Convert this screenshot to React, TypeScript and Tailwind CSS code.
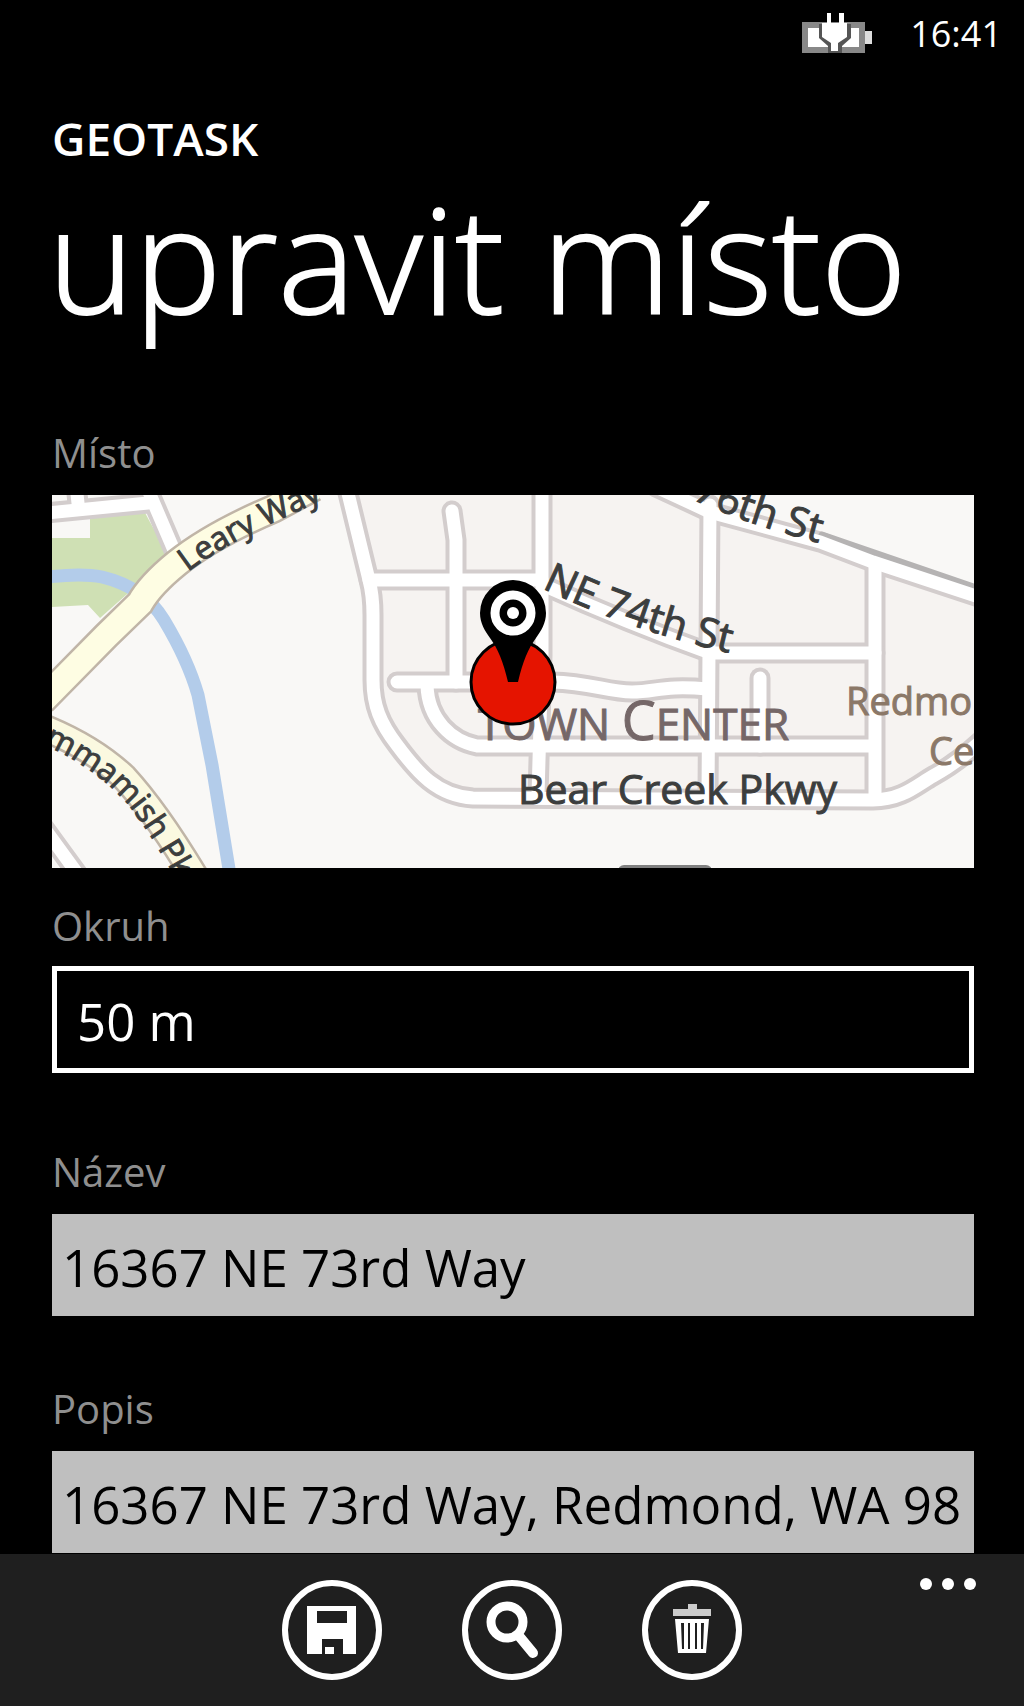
import React from "react";

const roads = [
  // outer loop and Bear Creek Pkwy
  "M294 -10 L317 85 Q321 100 321 120 L321 185 C321 210 328 228 345 250 C365 277 385 301 421 303 L821 305 C850 305 865 290 881 281 Q905 268 930 245",
  "M317 85 H490",
  "M400 16 L404 45 V187",
  "M490 -10 V160 L486 300",
  "M345 187 H500 C540 188 555 197 580 197 C605 197 610 190 656 194",
  "M375 190 C376 225 400 246 425 251 H821",
  "M658 10 L656 300",
  "M823 70 V300",
  "M656 158 H823",
  "M491 90 Q575 128 658 158",
  "M604 -8 L658 17 L768 47 L821 67 L930 103",
  "M708 183 V251",
  // west side
  "M-6 18 L96 8",
  "M24 -10 L26 8",
  "M94 -10 L124 60",
  "M-10 330 L30 385",
];

const LEARY = "M-10 206 L55 140 L88 108 Q98 90 125 68 Q160 40 221 14 L262 -8";
const SAMMAMISH = "M-10 232 Q40 252 72 282 Q105 318 145 385";

const Map = () => (
  <svg
    viewBox="0 0 922 373"
    className="block w-full font-['Open_Sans',sans-serif]"
    role="img"
    aria-label="Mapa"
  >
    <defs>
      <path id="leary-label" d="M136 77 Q177 46 238 20 L310 -14" />
      <path id="sammamish-label" d="M-9 249 Q46 274 78 312 Q102 343 130 395" />
      <path id="ne74-label" d="M490 93 Q590 142 720 167" />
      <path id="st76-label" d="M640 4 Q702 33 800 56" />
    </defs>
    <rect width="922" height="373" fill="#f9f8f6" />
    <path
      d="M294 -10 L321 95 V185 C325 240 365 297 421 303 H821 Q870 300 922 255 V100 L768 47 L600 -10 Z"
      fill="#f6f3f1"
    />
    <path
      d="M38 22 L92 16 L117 62 L48 123 L36 110 L0 112 V43 H38 Z"
      fill="#cfe0b4"
    />
    <path
      d="M-4 82 Q30 78 50 82 Q92 92 112 125 Q136 165 146 200 L160 270 L178 380"
      fill="none"
      stroke="#b3ccea"
      strokeWidth="13"
    />

    <g fill="none" stroke="#d3cdcd" strokeWidth="21" strokeLinecap="round">
      {roads.map((d) => (
        <path key={d} d={d} />
      ))}
      <path d="M770 40 L930 95" stroke="#b5b3b3" strokeWidth="7" />
    </g>
    <g fill="none" stroke="#ffffff" strokeWidth="13" strokeLinecap="round">
      {roads.map((d) => (
        <path key={d} d={d} />
      ))}
    </g>

    <g fill="none">
      <path d={SAMMAMISH} stroke="#c0b5a7" strokeWidth="29" />
      <path d={LEARY} stroke="#c0b5a7" strokeWidth="30" />
      <path d={SAMMAMISH} stroke="#fbf9e0" strokeWidth="24" />
      <path d={LEARY} stroke="#fefde3" strokeWidth="25" />
    </g>
    <rect x="566" y="370" width="94" height="12" rx="6" fill="#808080" />

    <g fill="#3c3e3e" stroke="#3c3e3e" strokeWidth="1">
      <text fontSize="32">
        <textPath href="#leary-label">Leary Way</textPath>
      </text>
      <text fontSize="32">
        <textPath href="#sammamish-label">mmamish Pk</textPath>
      </text>
      <text fontSize="41">
        <textPath href="#ne74-label">NE 74th St</textPath>
      </text>
      <text fontSize="41">
        <textPath href="#st76-label">76th St</textPath>
      </text>
      <text x="466" y="309" fontSize="41">
        Bear Creek Pkwy
      </text>
    </g>
    <text x="426" y="245" fontSize="44" fill="#756768" stroke="#756768" strokeWidth="1">
      TOWN <tspan fontSize="54">C</tspan>ENTER
    </text>
    <g fill="#8b7868" stroke="#8b7868" strokeWidth="1" fontSize="38">
      <text x="794" y="220">
        Redmo
      </text>
      <text x="877" y="270">
        Ce
      </text>
    </g>

    <circle cx="461" cy="187" r="42" fill="#e51400" stroke="#000" strokeWidth="3" />
    <path
      d="M461 85 A33 33 0 0 1 494 118 C494 128 489 136 484 143 C476 154 471 166 466 187 H456 C451 166 446 154 438 143 C433 136 428 128 428 118 A33 33 0 0 1 461 85 Z"
      fill="#000"
    />
    <circle cx="461" cy="118" r="18" fill="none" stroke="#fff" strokeWidth="9" />
    <circle cx="461" cy="118" r="6" fill="#fff" />
  </svg>
);

const BatteryIcon = () => (
  <svg width="72" height="44" viewBox="0 0 72 44" aria-hidden="true">
    <rect x="3" y="13" width="57" height="25" fill="#fff" stroke="#888" strokeWidth="6" />
    <rect x="63" y="19" width="7" height="13" fill="#ddd" />
    <path d="M17 12 H49 V26 L40 34 V41 H26 V34 L17 26 Z" fill="#555" />
    <path
      d="M25 1 H29 V11 H37 V1 H42 V11 H45 V25 L36 31 V39 H29 V31 L20 25 V11 H25 Z"
      fill="#fff"
    />
  </svg>
);

const SaveIcon = () => (
  <svg viewBox="0 0 102 102" className="size-full" aria-hidden="true">
    <circle cx="51" cy="51" r="47" fill="none" stroke="#fff" strokeWidth="6" />
    <path
      d="M26 27 H75 V75 H62 V60 H41 V75 H26 Z M36 32 V44 H66 V32 Z"
      fill="#fff"
      fillRule="evenodd"
    />
    <rect x="44" y="68" width="9" height="7" fill="#fff" />
  </svg>
);

const SearchIcon = () => (
  <svg viewBox="0 0 102 102" className="size-full" aria-hidden="true">
    <circle cx="51" cy="51" r="47" fill="none" stroke="#fff" strokeWidth="6" />
    <circle cx="46" cy="43" r="16" fill="none" stroke="#fff" strokeWidth="9" />
    <path d="M58 57 L72 74" stroke="#fff" strokeWidth="10" strokeLinecap="round" />
  </svg>
);

const DeleteIcon = () => (
  <svg viewBox="0 0 102 102" className="size-full" aria-hidden="true">
    <circle cx="51" cy="51" r="47" fill="none" stroke="#fff" strokeWidth="6" />
    <path d="M47 25 H56 V30 H70 V37 H32 V30 H47 Z" fill="#ccc" />
    <path
      d="M34 40 H68 L65 74 H37 Z M40 44 L41 70 H43 V44 Z M47 44 V70 H49 V44 Z M54 44 V70 H56 V44 Z M60 44 V70 H62 L63 44 Z"
      fill="#fff"
      fillRule="evenodd"
    />
  </svg>
);

const actions = [
  { label: "uložit", icon: SaveIcon },
  { label: "hledat", icon: SearchIcon },
  { label: "odstranit", icon: DeleteIcon },
];

const labelClass = "block text-[40px] leading-[56px] text-[#8f8f8f]";
const inputClass =
  "block h-[102px] w-full bg-[#bfbfbf] px-[10px] pt-1 text-[51px] text-black outline-none";

const App = () => {
  return (
    <div className="flex min-h-screen flex-col bg-black font-['Open_Sans',sans-serif] text-white">
      <div className="flex h-[68px] items-center justify-end gap-9 pr-[22px]">
        <BatteryIcon />
        <span className="text-[36px] leading-[44px]">16:41</span>
      </div>

      <header className="pl-[52px] pr-[50px]">
        <p className="mt-10 text-[46px] font-semibold leading-[60px]">GEOTASK</p>
        <h1 className="-ml-1 text-[146px] font-light leading-[180px] whitespace-nowrap [-webkit-text-stroke:2px_white]">
          upravit místo
        </h1>
      </header>

      <main className="flex-1 pl-[52px] pr-[50px]">
        <h2 className={`${labelClass} mt-[77px] mb-[14px]`}>Místo</h2>
        <Map />

        <label htmlFor="radius" className={`${labelClass} mt-[30px] mb-3`}>
          Okruh
        </label>
        <select
          id="radius"
          className="block h-[107px] w-full appearance-none border-[5px] border-white bg-black px-5 pt-1 text-[51px] outline-none"
        >
          <option>50 m</option>
        </select>

        <label htmlFor="name" className={`${labelClass} mt-[71px] mb-[14px]`}>
          Název
        </label>
        <input id="name" className={inputClass} defaultValue="16367 NE 73rd Way" />

        <label htmlFor="description" className={`${labelClass} mt-[65px] mb-[14px]`}>
          Popis
        </label>
        <input
          id="description"
          className={inputClass}
          defaultValue="16367 NE 73rd Way, Redmond, WA 98"
        />
      </main>

      <footer className="relative flex h-[152px] justify-center gap-[78px] bg-[#1f1f1f] pt-[25px]">
        {actions.map((action) => {
          const Icon = action.icon;
          return (
            <button key={action.label} aria-label={action.label} className="size-[102px]">
              <Icon />
            </button>
          );
        })}
        <button
          aria-label="další"
          className="absolute top-6 right-12 flex gap-[10px]"
        >
          <span className="size-3 rounded-full bg-white"></span>
          <span className="size-3 rounded-full bg-white"></span>
          <span className="size-3 rounded-full bg-white"></span>
        </button>
      </footer>
    </div>
  );
};

export default App;
